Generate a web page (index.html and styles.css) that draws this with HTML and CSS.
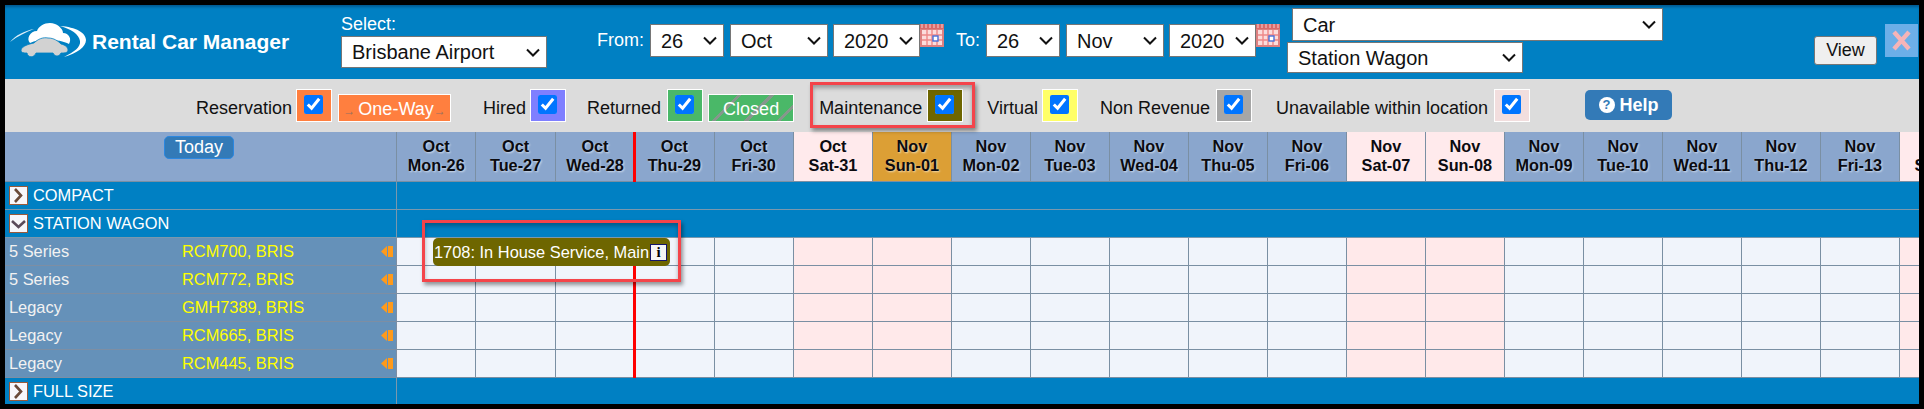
FILE: index.html
```html
<!DOCTYPE html>
<html lang="en">
<head>
<meta charset="utf-8">
<title>Rental Car Manager</title>
<link rel="stylesheet" href="styles.css">
</head>
<body>
<svg class="defs" width="0" height="0" aria-hidden="true">
  <symbol id="cal" viewBox="0 0 24 23">
    <rect x="0" y="0" width="24" height="23" fill="#dd8080"/>
    <rect x="0" y="0" width="24" height="5" fill="#d96a6a"/>
    <path d="M2 0v4M6 0v4M10 0v4M14 0v4M18 0v4M22 0v4" stroke="#f6d0d0" stroke-width="1"/>
    <rect x="2" y="6" width="20" height="15" fill="#fbdcdc"/>
    <path d="M2 11h20M2 16h20M7 6v15M12 6v15M17 6v15" stroke="#e88" stroke-width="1.4"/>
    <rect x="13" y="12" width="5" height="5" fill="#fff" stroke="#4a70d8" stroke-width="1.4"/>
  </symbol>
  <symbol id="flag" viewBox="0 0 12 13">
    <path d="M6 1v11L0 6.500z" fill="#ff9a1a"/>
    <rect x="7" y="1" width="5" height="11" fill="#ff9a1a"/>
  </symbol>
  <symbol id="exp-r" viewBox="0 0 19 19">
    <rect x="0.5" y="0.5" width="18" height="18" fill="#f7f7fb" stroke="#9a5a3a"/>
    <path d="M6 3l6 6.5-6 6.5" fill="none" stroke="#6a4a3a" stroke-width="2.6"/>
  </symbol>
  <symbol id="exp-d" viewBox="0 0 19 19">
    <rect x="0.5" y="0.5" width="18" height="18" fill="#f7f7fb" stroke="#9a5a3a"/>
    <path d="M3 7l6.500 6 6.500-6" fill="none" stroke="#5a4a5a" stroke-width="2.6"/>
  </symbol>
</svg>
<div class="frame">
  <header class="topbar">
    <div class="brand">
      <svg class="logo" viewBox="0 0 90 50" width="90" height="50" aria-hidden="true">
        <path d="M0 27C6 20 14 16 24 14C16 17 8 21 0 27Z" fill="#dff0fa"/>
        <path d="M50 11C66 12 76 18 76 25C76 32 67 38 54 42C64 37 71 32 70 26C69 19 61 14 50 11Z" fill="#fff"/>
        <path d="M20 28C16 24 20 16 27 16C29 10 38 6 45 9C50 11 53 15 53 18C59 18 62 24 59 29C50 24 30 23 20 28Z" fill="#fff"/>
        <path d="M11 35C12 31 19 29 24 28C28 24 33 22 38 23C44 23 48 26 51 29C55 30 58 32 58 35C58 38 54 38 51 38C49 42 45 42 43 38H26C24 43 18 43 17 38C14 38 11 38 11 35Z" fill="#d2d2d2" stroke="#0080c3" stroke-width=".8"/>
      </svg>
      <span class="brand-name">Rental Car Manager</span>
    </div>
    <div class="site">
      <label class="select-label">Select:</label>
      <select class="sel sel-site"><option>Brisbane Airport</option></select>
    </div>
    <div class="range range-from">
      <span class="range-label">From:</span>
      <select class="sel sel-day"><option>26</option></select>
      <select class="sel sel-mon"><option>Oct</option></select>
      <select class="sel sel-year"><option>2020</option></select>
      <svg class="cal"><use href="#cal"/></svg>
    </div>
    <div class="range range-to">
      <span class="range-label range-label-to">To:</span>
      <select class="sel sel-day"><option>26</option></select>
      <select class="sel sel-mon"><option>Nov</option></select>
      <select class="sel sel-year"><option>2020</option></select>
      <svg class="cal"><use href="#cal"/></svg>
    </div>
    <div class="types">
      <select class="sel sel-cat"><option>Car</option></select>
      <select class="sel sel-class"><option>Station Wagon</option></select>
    </div>
    <button class="view">View</button>
    <button class="close" aria-label="Close">
      <svg viewBox="0 0 33 33" width="33" height="33"><path d="M9 8l15 17M24 8L9 25" stroke="#f6b4b8" stroke-width="4.4"/></svg>
    </button>
  </header>

  <section class="legend">
    <span class="lg lg-res">Reservation</span>
    <span class="swatch sw-res"><input type="checkbox" checked></span>
    <span class="tag tag-oneway"><i class="arr arr-l">→</i>One-Way<i class="arr">→</i></span>
    <span class="lg lg-hired">Hired</span>
    <span class="swatch sw-hired"><input type="checkbox" checked></span>
    <span class="lg lg-ret">Returned</span>
    <span class="swatch sw-ret"><input type="checkbox" checked></span>
    <span class="tag tag-closed">Closed</span>
    <span class="lg lg-mnt">Maintenance</span>
    <span class="swatch sw-mnt"><input type="checkbox" checked></span>
    <span class="lg lg-vir">Virtual</span>
    <span class="swatch sw-vir"><input type="checkbox" checked></span>
    <span class="lg lg-non">Non Revenue</span>
    <span class="swatch sw-non"><input type="checkbox" checked></span>
    <span class="lg lg-una">Unavailable within location</span>
    <span class="swatch sw-una"><input type="checkbox" checked></span>
    <button class="help"><span class="q">?</span>Help</button>
  </section>

  <section class="sched">
    <div class="row head">
      <div class="side side-head"><button class="today">Today</button></div>
      <div class="hd">Oct<br>Mon-26</div><div class="hd">Oct<br>Tue-27</div><div class="hd">Oct<br>Wed-28</div>
      <div class="hd now">Oct<br>Thu-29</div><div class="hd">Oct<br>Fri-30</div><div class="hd we">Oct<br>Sat-31</div>
      <div class="hd cur">Nov<br>Sun-01</div><div class="hd">Nov<br>Mon-02</div><div class="hd">Nov<br>Tue-03</div>
      <div class="hd">Nov<br>Wed-04</div><div class="hd">Nov<br>Thu-05</div><div class="hd">Nov<br>Fri-06</div>
      <div class="hd we">Nov<br>Sat-07</div><div class="hd we">Nov<br>Sun-08</div><div class="hd">Nov<br>Mon-09</div>
      <div class="hd">Nov<br>Tue-10</div><div class="hd">Nov<br>Wed-11</div><div class="hd">Nov<br>Thu-12</div>
      <div class="hd">Nov<br>Fri-13</div><div class="hd we">Nov<br>Sat-14</div>
    </div>

    <div class="row group">
      <div class="side side-group"><svg class="exp"><use href="#exp-r"/></svg>COMPACT</div><div class="band"></div>
    </div>
    <div class="row group">
      <div class="side side-group"><svg class="exp"><use href="#exp-d"/></svg>STATION WAGON</div><div class="band"></div>
    </div>

    <div class="row unit">
      <div class="side side-unit"><span class="model">5 Series</span><span class="plate">RCM700, BRIS</span><svg class="flag"><use href="#flag"/></svg></div>
      <div class="c"><div class="bar"><span class="bar-text">1708: In House Service, Main</span><span class="info">i</span></div></div><div class="c"></div><div class="c"></div>
      <div class="c now"></div><div class="c"></div><div class="c we"></div><div class="c we"></div><div class="c"></div><div class="c"></div><div class="c"></div><div class="c"></div><div class="c"></div><div class="c we"></div><div class="c we"></div><div class="c"></div><div class="c"></div><div class="c"></div><div class="c"></div><div class="c"></div><div class="c we"></div>
    </div>
    <div class="row unit">
      <div class="side side-unit"><span class="model">5 Series</span><span class="plate">RCM772, BRIS</span><svg class="flag"><use href="#flag"/></svg></div>
      <div class="c"></div><div class="c"></div><div class="c"></div>
      <div class="c now"></div><div class="c"></div><div class="c we"></div><div class="c we"></div><div class="c"></div><div class="c"></div><div class="c"></div><div class="c"></div><div class="c"></div><div class="c we"></div><div class="c we"></div><div class="c"></div><div class="c"></div><div class="c"></div><div class="c"></div><div class="c"></div><div class="c we"></div>
    </div>
    <div class="row unit">
      <div class="side side-unit"><span class="model">Legacy</span><span class="plate">GMH7389, BRIS</span><svg class="flag"><use href="#flag"/></svg></div>
      <div class="c"></div><div class="c"></div><div class="c"></div>
      <div class="c now"></div><div class="c"></div><div class="c we"></div><div class="c we"></div><div class="c"></div><div class="c"></div><div class="c"></div><div class="c"></div><div class="c"></div><div class="c we"></div><div class="c we"></div><div class="c"></div><div class="c"></div><div class="c"></div><div class="c"></div><div class="c"></div><div class="c we"></div>
    </div>
    <div class="row unit">
      <div class="side side-unit"><span class="model">Legacy</span><span class="plate">RCM665, BRIS</span><svg class="flag"><use href="#flag"/></svg></div>
      <div class="c"></div><div class="c"></div><div class="c"></div>
      <div class="c now"></div><div class="c"></div><div class="c we"></div><div class="c we"></div><div class="c"></div><div class="c"></div><div class="c"></div><div class="c"></div><div class="c"></div><div class="c we"></div><div class="c we"></div><div class="c"></div><div class="c"></div><div class="c"></div><div class="c"></div><div class="c"></div><div class="c we"></div>
    </div>
    <div class="row unit">
      <div class="side side-unit"><span class="model">Legacy</span><span class="plate">RCM445, BRIS</span><svg class="flag"><use href="#flag"/></svg></div>
      <div class="c"></div><div class="c"></div><div class="c"></div>
      <div class="c now"></div><div class="c"></div><div class="c we"></div><div class="c we"></div><div class="c"></div><div class="c"></div><div class="c"></div><div class="c"></div><div class="c"></div><div class="c we"></div><div class="c we"></div><div class="c"></div><div class="c"></div><div class="c"></div><div class="c"></div><div class="c"></div><div class="c we"></div>
    </div>

    <div class="row group group-last">
      <div class="side side-group"><svg class="exp"><use href="#exp-r"/></svg>FULL SIZE</div><div class="band"></div>
    </div>
  </section>

  <div class="mark mark-legend"></div>
  <div class="mark mark-bar"></div>
</div>
</body>
</html>
```
FILE: styles.css
```css
* { box-sizing: border-box; }
html, body { margin: 0; padding: 0; background: #000; }
body { font-family: "Liberation Sans", Arial, sans-serif; font-size: 18px; color: #111; overflow: hidden; }
.defs { position: absolute; }

.frame { position: relative; width: 1924px; height: 409px; padding: 5px; background: #000; overflow: hidden; }

/* top bar */
.topbar { display: flex; align-items: flex-start; height: 74px; background: #0080c3; box-shadow: inset 0 3px 3px -1px rgba(0,40,80,.45); }
.brand { width: 336px; height: 74px; display: flex; align-items: flex-start; padding-left: 5px; }
.logo { margin-top: 10px; flex: none; }
.brand-name { margin: 25px 0 0 -8px; font-size: 21px; line-height: 24px; font-weight: bold; color: #fff; white-space: nowrap; }
.site { width: 206px; margin-top: 9px; display: flex; flex-direction: column; }
.select-label { color: #fff; font-size: 18px; line-height: 20px; height: 22px; }
.sel { display: block; height: 32px; padding: 0 0 0 10px; border: 1px solid #767676; border-radius: 0; color: #111; font: 20px "Liberation Sans", Arial, sans-serif; flex: none; appearance: none; -webkit-appearance: none; background: #fff url("data:image/svg+xml,%3Csvg xmlns='http://www.w3.org/2000/svg' width='14' height='9'%3E%3Cpath d='M1 1.500l6 6 6-6' fill='none' stroke='%23111' stroke-width='2'/%3E%3C/svg%3E") no-repeat right 6px center; }
.sel-site { width: 206px; height: 32px; }
.range { display: flex; align-items: flex-start; margin-top: 19px; }
.range-from { margin-left: 50px; }
.range-to { margin-left: 12px; }
.range-label { color: #fff; font-size: 18px; line-height: 32px; width: 53px; }
.range-label-to { width: 30px; }
.range .sel { height: 33px; }
.sel-day { width: 74px; margin-right: 6px; }
.sel-mon { width: 98px; margin-right: 5px; }
.sel-year { width: 87px; }
.cal { width: 24px; height: 23px; flex: none; }
.types { margin: 3px 0 0 7px; width: 375px; display: flex; flex-direction: column; gap: 1px; }
.sel-cat { width: 371px; margin-left: 5px; height: 33px; }
.sel-class { width: 236px; height: 31px; }
.view { margin: 31px 0 0 152px; width: 63px; height: 29px; padding: 0; border: 1px solid #767676; border-radius: 3px; background: #efefef; color: #111; font: 18px "Liberation Sans", Arial, sans-serif; flex: none; }
.close { margin: 19px 0 0 8px; width: 33px; height: 33px; padding: 0; border: 0; background: #6cafe8; flex: none; display: block; }
.close svg { display: block; }

/* legend */
.legend { height: 53px; background: #dcdcdc; display: flex; align-items: flex-start; padding-left: 191px; }
.lg { margin-top: 18px; line-height: 22px; white-space: nowrap; color: #111; }
.swatch { width: 36px; height: 33px; margin: 10px 0 0 4px; border: 1px solid #fff; padding: 5px 0 0 7px; flex: none; display: block; }
.swatch input { display: block; width: 19px; height: 19px; margin: 0; }
.sw-res { background: #ff7f3f; }
.sw-hired { background: #7f7fff; }
.sw-ret { background: #4ab868; margin-left: 6px; }
.sw-mnt { background: #6e6600; margin-left: 5px; }
.sw-vir { background: #ffff66; }
.sw-non { background: #a6a6a6; margin-left: 6px; }
.sw-una { background: #f2dede; margin-left: 6px; }
.tag { margin: 15px 0 0 6px; height: 28px; line-height: 28px; border: 1px solid #fff; color: #fff; text-align: center; white-space: nowrap; flex: none; }
.tag-oneway { width: 113px; background: #ff7f3f; }
.arr { font-style: normal; color: #94705f; font-size: 12px; }
.arr-l { margin-right: 3px; }
.tag-closed { margin-left: 5px; width: 86px; background: repeating-linear-gradient(135deg, #4ab868 0 20px, #86978c 20px 23px); }
.lg-hired { margin-left: 32px; }
.lg-ret { margin-left: 21px; }
.lg-mnt { margin-left: 25px; }
.lg-vir { margin-left: 24px; }
.lg-non { margin-left: 22px; }
.lg-una { margin-left: 24px; }
.help { margin: 11px 0 0 55px; width: 87px; height: 30px; padding: 0; border: 0; border-radius: 5px; background: #337ab7; color: #fff; font: bold 18px "Liberation Sans", Arial, sans-serif; display: flex; align-items: center; justify-content: center; gap: 5px; flex: none; }
.q { width: 16px; height: 16px; border-radius: 50%; background: #fff; color: #337ab7; font-size: 13px; line-height: 16px; font-weight: bold; text-align: center; display: block; }

/* schedule */
.sched { width: 1914px; overflow: hidden; }
.row { display: flex; height: 28px; width: max-content; }
.head { height: 50px; }
.side { width: 392px; flex: none; }
.side-head { background: #8aa6cd; border-bottom: 1px solid #7a8fa3; border-right: 1px solid #7a8fa3; display: flex; justify-content: center; align-items: flex-start; padding: 4px 3px 0 0; }
.today { width: 70px; height: 23px; padding: 0; border: 1px solid #2b87e0; border-radius: 5px; background: #337ab7; color: #fff; font: 18px "Liberation Sans", Arial, sans-serif; }
.hd { position: relative; width: 79px; flex: none; background: #8aa6cd; border-right: 1px solid #7a8fa3; border-bottom: 1px solid #7a8fa3; font-size: 16.3px; line-height: 19px; font-weight: bold; text-align: center; padding-top: 5px; color: #0b0b10; text-shadow: 1px 1px 2px rgba(255,255,255,.6); white-space: nowrap; }
.hd:nth-child(-n+6), .c:nth-child(-n+6) { width: 79.4px; }
.hd.we { background: #ffeaec; text-shadow: none; }
.hd.cur { background: #dc9f35; }
.now::before { content: ""; position: absolute; left: -2px; top: 0; bottom: -1px; width: 3px; background: #f00; }

.group { background: #0080c3; }
.group-last { height: 26px; }
.side-group { display: flex; align-items: center; gap: 5px; padding-left: 4px; color: #fff; font-size: 16.4px; border-bottom: 1px solid #7a98ad; border-right: 1px solid #7a98ad; }
.group-last .side-group { border-bottom: 0; }
.exp { width: 19px; height: 19px; flex: none; }
.band { width: 1582px; flex: none; border-bottom: 1px solid #7a98ad; }
.group-last .band { border-bottom: 0; }

.side-unit { background: #6591b9; color: #fff; font-size: 16.4px; border-bottom: 1px solid #7d8ea3; border-right: 1px solid #7d8ea3; display: flex; align-items: center; padding-left: 4px; }
.model { width: 173px; color: #f2f2f2; }
.plate { width: 199px; color: #ffff00; white-space: nowrap; }
.flag { width: 12px; height: 13px; flex: none; }

.c { position: relative; width: 79px; flex: none; background: #f0f4fb; border-right: 1px solid #7a8fa3; border-bottom: 1px solid #7a8fa3; }
.c.we { background: #ffe9ea; }
.bar { position: absolute; z-index: 2; left: 36px; top: 0; width: 237px; height: 28px; border-radius: 5px; background: #6e6600; color: #fff; display: flex; align-items: center; padding-left: 1px; font-size: 16.4px; white-space: nowrap; }
.bar-text { width: 216px; overflow: hidden; }
.info { width: 17px; height: 17px; border: 1px solid #14146a; background: #f5f5f5; color: #000; font: bold 15px/15px "Liberation Serif", serif; text-align: center; display: block; flex: none; }

/* red call-outs */
.mark { position: absolute; border: 3px solid #f4444a; box-shadow: 2px 3px 4px rgba(0,0,0,.4), inset 0 3px 4px rgba(0,0,0,.3); pointer-events: none; z-index: 5; }
.mark-legend { left: 810px; top: 82px; width: 165px; height: 46px; }
.mark-bar { left: 422px; top: 220px; width: 259px; height: 62px; }
```
